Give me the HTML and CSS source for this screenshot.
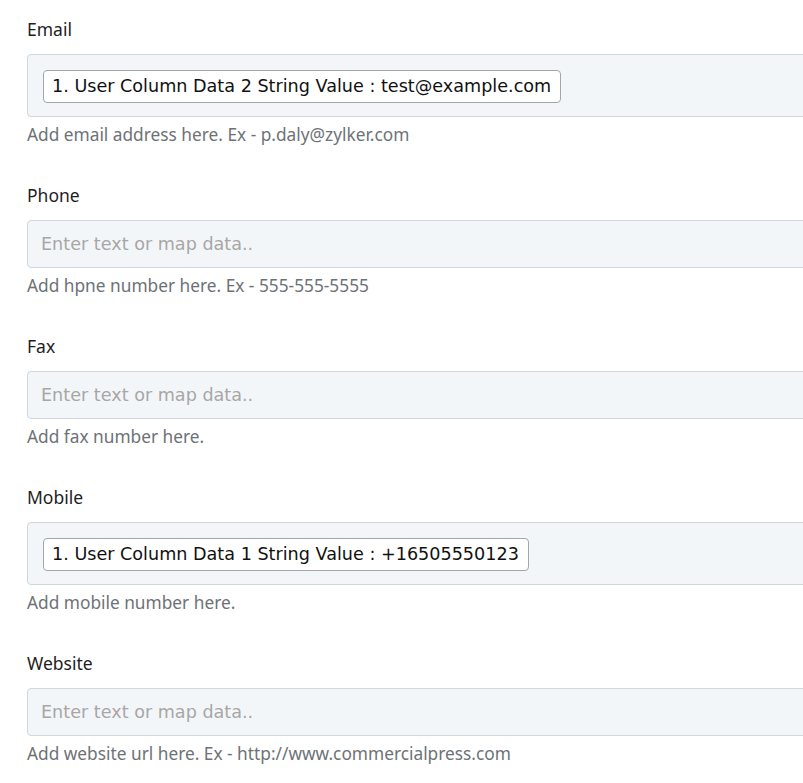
FILE: index.html
```html
<!DOCTYPE html>
<html lang="en">
<head>
<meta charset="utf-8">
<title>Contact fields</title>
<link rel="stylesheet" href="styles.css">
</head>
<body>
<form class="form">
  <div class="field">
    <label class="field-label">Email</label>
    <div class="field-box field-box--mapped">
      <span class="token">1. User Column Data 2 String Value : test@example.com</span>
    </div>
    <p class="field-help">Add email address here. Ex - p.daly@zylker.com</p>
  </div>

  <div class="field">
    <label class="field-label">Phone</label>
    <div class="field-box">
      <span class="placeholder">Enter text or map data..</span>
    </div>
    <p class="field-help">Add hpne number here. Ex - 555-555-5555</p>
  </div>

  <div class="field">
    <label class="field-label">Fax</label>
    <div class="field-box">
      <span class="placeholder">Enter text or map data..</span>
    </div>
    <p class="field-help">Add fax number here.</p>
  </div>

  <div class="field">
    <label class="field-label">Mobile</label>
    <div class="field-box field-box--mapped">
      <span class="token">1. User Column Data 1 String Value : +16505550123</span>
    </div>
    <p class="field-help">Add mobile number here.</p>
  </div>

  <div class="field">
    <label class="field-label">Website</label>
    <div class="field-box">
      <span class="placeholder">Enter text or map data..</span>
    </div>
    <p class="field-help">Add website url here. Ex - http://www.commercialpress.com</p>
  </div>
</form>
</body>
</html>
```

FILE: styles.css
```css
html, body {
  margin: 0;
  padding: 0;
  background: #ffffff;
}

.form {
  padding: 17px 0 0 27px;
  overflow: hidden;
  font-family: "Noto Sans", "Open Sans", sans-serif;
}

.field {
  margin-bottom: 36px;
}

.field-label {
  display: block;
  font-size: 17.5px;
  line-height: 24px;
  color: #1e1e1e;
  margin-bottom: 13px;
}

.field-box {
  box-sizing: border-box;
  height: 48px;
  margin-right: -40px;
  padding: 0 13px;
  background: #f3f6f9;
  border: 1px solid #d2d6db;
  border-radius: 4px;
  display: flex;
  align-items: center;
  font-family: "DejaVu Sans", Verdana, sans-serif;
  font-size: 17.6px;
}

.field-box--mapped {
  height: 63px;
  padding: 15px 15px 13px;
  align-items: flex-start;
}

.placeholder {
  color: #a8a6a6;
  line-height: 46px;
}

.token {
  box-sizing: border-box;
  height: 33px;
  line-height: 31px;
  padding: 0 9px 0 8px;
  background: #ffffff;
  border: 1px solid #a3a6aa;
  border-radius: 4px;
  color: #111111;
  white-space: nowrap;
}

.field-help {
  margin: 6px 0 0;
  font-size: 17.3px;
  line-height: 24px;
  color: #6d7277;
}
```
